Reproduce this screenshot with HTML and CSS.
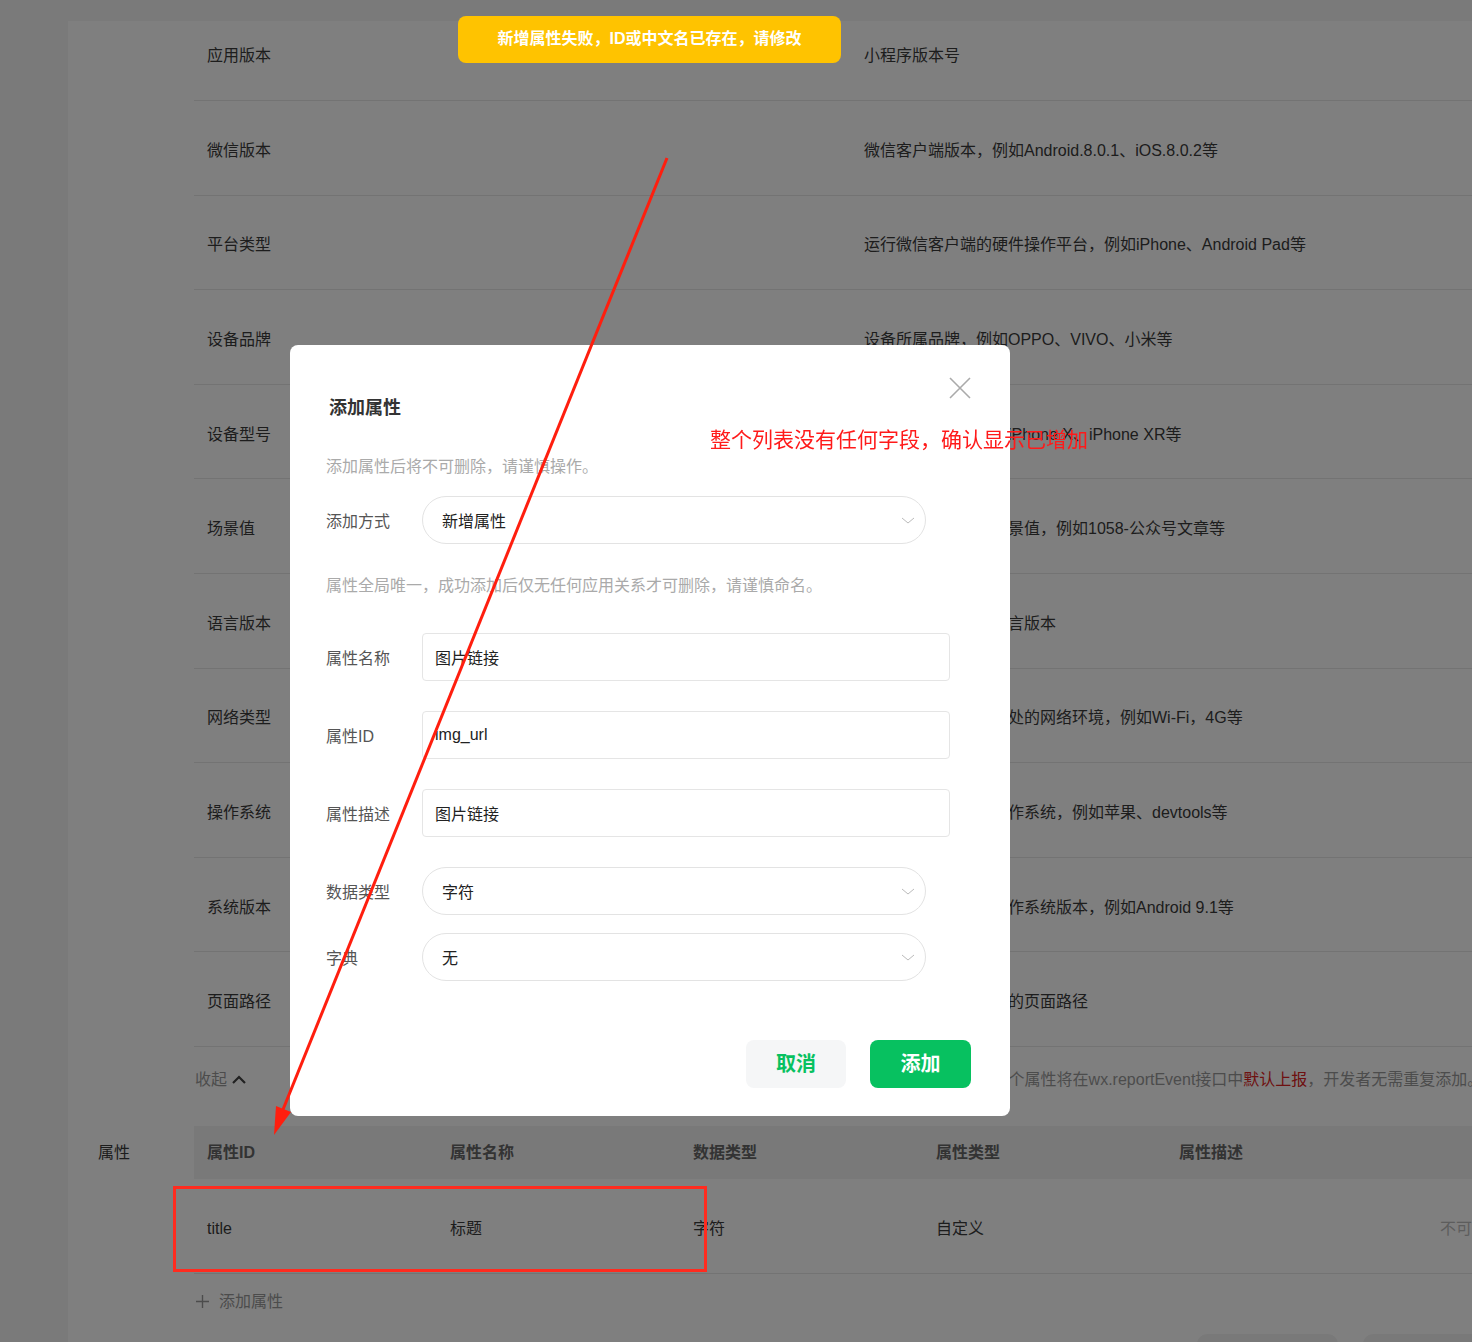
FILE: index.html
```html
<!DOCTYPE html>
<html lang="zh-CN">
<head>
    <meta charset="utf-8">
    <title>属性管理</title>
    <link rel="stylesheet" href="styles.css">
</head>
<body>
    <div class="page">
        <div class="card">
            <!-- preset attributes -->
            <div class="preset-list">
                <div class="preset-row"><span>应用版本</span><span>小程序版本号</span></div>
                <div class="preset-row"><span>微信版本</span><span>微信客户端版本，例如Android.8.0.1、iOS.8.0.2等</span></div>
                <div class="preset-row"><span>平台类型</span><span>运行微信客户端的硬件操作平台，例如iPhone、Android Pad等</span></div>
                <div class="preset-row"><span>设备品牌</span><span>设备所属品牌，例如OPPO、VIVO、小米等</span></div>
                <div class="preset-row"><span>设备型号</span><span>设备具体型号，例如iPhone X、iPhone XR等</span></div>
                <div class="preset-row"><span>场景值</span><span>用户打开小程序的场景值，例如1058-公众号文章等</span></div>
                <div class="preset-row"><span>语言版本</span><span>微信客户端设置的语言版本</span></div>
                <div class="preset-row"><span>网络类型</span><span>小程序运行时设备所处的网络环境，例如Wi-Fi，4G等</span></div>
                <div class="preset-row"><span>操作系统</span><span>用户设备所运行的操作系统，例如苹果、devtools等</span></div>
                <div class="preset-row"><span>系统版本</span><span>用户设备所运行的操作系统版本，例如Android 9.1等</span></div>
                <div class="preset-row"><span>页面路径</span><span>上报时用户当前所处的页面路径</span></div>
                <div class="fold-row">
                    <span class="fold">收起
                        <svg class="fold-icon" width="14" height="9" viewBox="0 0 14 9"><path d="M1 8 L7 2 L13 8" /></svg>
                    </span>
                    <span class="fold-note">以上列表中所示的11个属性将在wx.reportEvent接口中<em>默认上报</em>，开发者无需重复添加。</span>
                </div>
            </div>

            <!-- custom attributes -->
            <div class="attr-section">
                <div class="attr-label">属性</div>
                <div class="attr-table">
                    <div class="attr-head">
                        <span>属性ID</span>
                        <span>属性名称</span>
                        <span>数据类型</span>
                        <span>属性类型</span>
                        <span>属性描述</span>
                        <span></span>
                    </div>
                    <div class="attr-row">
                        <span>title</span>
                        <span>标题</span>
                        <span>字符</span>
                        <span>自定义</span>
                        <span></span>
                        <span class="muted">不可删除</span>
                    </div>
                    <div class="attr-add">
                        <svg width="13" height="13" viewBox="0 0 13 13"><path d="M6.5 0 V13 M0 6.5 H13" /></svg>
                        <span>添加属性</span>
                    </div>
                </div>
            </div>

            <div class="footer-btns">
                <span class="ghost-btn"></span>
                <span class="ghost-btn"></span>
            </div>
        </div>
    </div>

    <div class="mask"></div>

    <div class="dialog">
        <svg class="dialog-close" width="22" height="22" viewBox="0 0 22 22"><path d="M1 1 L21 21 M21 1 L1 21" /></svg>
        <div class="dialog-title">添加属性</div>
        <div class="dialog-tip tip-first">添加属性后将不可删除，请谨慎操作。</div>

        <div class="form-row row-mode">
            <label class="form-label">添加方式</label>
            <div class="select">新增属性
                <svg class="arrow" width="14" height="7" viewBox="0 0 14 7"><path d="M1 1 L7 6 L13 1" /></svg>
            </div>
        </div>

        <div class="dialog-tip tip-second">属性全局唯一，成功添加后仅无任何应用关系才可删除，请谨慎命名。</div>

        <div class="form-row row-first">
            <label class="form-label">属性名称</label>
            <div class="input">图片链接</div>
        </div>
        <div class="form-row">
            <label class="form-label">属性ID</label>
            <div class="input">img_url</div>
        </div>
        <div class="form-row">
            <label class="form-label">属性描述</label>
            <div class="input">图片链接</div>
        </div>
        <div class="form-row">
            <label class="form-label">数据类型</label>
            <div class="select">字符
                <svg class="arrow" width="14" height="7" viewBox="0 0 14 7"><path d="M1 1 L7 6 L13 1" /></svg>
            </div>
        </div>
        <div class="form-row row-tight">
            <label class="form-label">字典</label>
            <div class="select">无
                <svg class="arrow" width="14" height="7" viewBox="0 0 14 7"><path d="M1 1 L7 6 L13 1" /></svg>
            </div>
        </div>

        <div class="dialog-actions">
            <button class="btn btn-cancel">取消</button>
            <button class="btn btn-primary">添加</button>
        </div>
    </div>

    <div class="toast">新增属性失败，ID或中文名已存在，请修改</div>

    <!-- review markup drawn on top of the screenshot -->
    <svg class="markup" width="1472" height="1342" viewBox="0 0 1472 1342">
        <line x1="667" y1="158" x2="282" y2="1112" />
        <polygon points="274,1135 276,1106 291,1112" />
    </svg>
    <div class="markup-text">整个列表没有任何字段，确认显示已增加</div>
    <div class="markup-box"></div>
</body>
</html>
```

FILE: styles.css
```css
html, body {
    margin: 0;
    padding: 0;
    overflow: hidden;
}

body {
    font-family: "Liberation Sans", "Noto Sans CJK SC", sans-serif;
    background-color: #f4f4f4;
    color: #3a3a3a;
    width: 1472px;
    height: 1342px;
    position: relative;
}

.page {
    padding: 21px 0 0 68px;
}

.card {
    width: 1500px;
    height: 1400px;
    background-color: #fff;
    overflow: hidden;
}

/* preset attribute list */
.preset-list {
    margin: -14.6px 0 0 126px;
}

.preset-row {
    display: grid;
    grid-template-columns: 657px 1fr;
    align-items: center;
    height: 94.6px;
    box-sizing: border-box;
    padding: 6px 0 0 13px;
    border-bottom: 1px solid #e6e6e6;
    font-size: 16px;
    line-height: 24px;
    white-space: nowrap;
}

.fold-row {
    display: grid;
    grid-template-columns: 669px 1fr;
    align-items: start;
    height: 79px;
    box-sizing: border-box;
    padding: 21px 0 0 1px;
    font-size: 16px;
    line-height: 24px;
    white-space: nowrap;
}

.fold {
    color: #999;
    display: flex;
    align-items: center;
    gap: 5px;
}

.fold-icon path {
    fill: none;
    stroke: #444;
    stroke-width: 2.2;
}

.fold-note {
    color: #999;
}

.fold-note em {
    font-style: normal;
    color: #d22;
}

/* custom attribute table */
.attr-section {
    display: flex;
}

.attr-label {
    width: 96px;
    padding-left: 30px;
    line-height: 53px;
    font-size: 16px;
    flex: none;
}

.attr-table {
    flex: none;
}

.attr-head,
.attr-row {
    display: grid;
    grid-template-columns: 243px 243px 243px 243px 261px 160px;
    align-items: center;
    box-sizing: border-box;
    font-size: 16px;
    line-height: 24px;
    white-space: nowrap;
}

.attr-head span,
.attr-row span {
    padding-left: 13px;
}

.attr-head {
    height: 53px;
    padding-top: 2px;
    background-color: #f3f3f3;
    font-weight: bold;
    color: #666;
}

.attr-row {
    height: 95px;
    padding-top: 6px;
    border-bottom: 1px solid #e6e6e6;
}

.attr-row .muted {
    color: #bbb;
}

.attr-add {
    display: flex;
    align-items: center;
    gap: 10px;
    margin-top: 16px;
    padding-left: 2px;
    font-size: 16px;
    line-height: 24px;
    color: #999;
}

.attr-add path {
    fill: none;
    stroke: #999;
    stroke-width: 1.4;
}

.footer-btns {
    display: flex;
    gap: 25px;
    padding-left: 1129px;
    margin-top: 20px;
}

.ghost-btn {
    width: 141px;
    height: 40px;
    background-color: #f3f3f3;
    border-radius: 10px;
    flex: none;
}

/* modal */
.mask {
    position: fixed;
    top: 0;
    left: 0;
    right: 0;
    bottom: 0;
    background-color: rgba(0, 0, 0, 0.5);
}

.dialog {
    position: fixed;
    left: 290px;
    top: 345px;
    width: 720px;
    height: 771px;
    box-sizing: border-box;
    padding: 50px 39px 28px 36px;
    background-color: #fff;
    border-radius: 8px;
}

.dialog-close {
    position: absolute;
    top: 32px;
    right: 39px;
}

.dialog-close path {
    fill: none;
    stroke: #aaa;
    stroke-width: 1.6;
}

.dialog-title {
    font-size: 18px;
    line-height: 26px;
    font-weight: bold;
    color: #333;
    padding-left: 3px;
}

.dialog-tip {
    font-size: 16px;
    line-height: 24px;
    color: #aaa;
    white-space: nowrap;
}

.tip-first {
    margin-top: 34px;
}

.tip-second {
    margin-top: 30px;
}

.form-row {
    display: flex;
    align-items: center;
    margin-top: 30px;
}

.form-row.row-mode {
    margin-top: 17px;
}

.form-row.row-first {
    margin-top: 35px;
}

.form-row.row-tight {
    margin-top: 18px;
}

.form-label {
    width: 96px;
    flex: none;
    font-size: 16px;
    color: #555;
}

.select,
.input {
    height: 48px;
    box-sizing: border-box;
    display: flex;
    align-items: center;
    font-size: 16px;
    color: #222;
}

.select {
    width: 504px;
    border: 1px solid #e3e3e3;
    border-radius: 24px;
    justify-content: space-between;
    padding: 0 10px 0 19px;
}

.select .arrow path {
    fill: none;
    stroke: #bbb;
    stroke-width: 1;
}

.input {
    width: 528px;
    border: 1px solid #e5e5e5;
    border-radius: 4px;
    padding: 0 12px;
}

.dialog-actions {
    display: flex;
    justify-content: flex-end;
    gap: 24px;
    margin-top: 59px;
}

.btn {
    height: 48px;
    width: 100px;
    padding: 0 0 3px;
    border: none;
    border-radius: 8px;
    font-family: inherit;
    font-size: 20px;
    font-weight: bold;
    cursor: pointer;
}

.btn-cancel {
    background-color: #f5f6f7;
    color: #07c160;
}

.btn-primary {
    width: 101px;
    background-color: #07c160;
    color: #fff;
}

/* toast */
.toast {
    position: fixed;
    left: 458px;
    top: 16px;
    width: 383px;
    height: 47px;
    box-sizing: border-box;
    padding-bottom: 5px;
    display: flex;
    align-items: center;
    justify-content: center;
    background-color: #ffc300;
    border-radius: 8px;
    color: #fff;
    font-size: 16px;
    font-weight: bold;
}

/* red review markup */
.markup {
    position: absolute;
    left: 0;
    top: 0;
}

.markup line {
    stroke: #ff1e0e;
    stroke-width: 3;
}

.markup polygon {
    fill: #ff1e0e;
}

.markup-text {
    position: absolute;
    left: 710px;
    top: 426px;
    font-size: 21px;
    line-height: 28px;
    color: #ff1a1a;
    white-space: nowrap;
}

.markup-box {
    position: absolute;
    left: 173px;
    top: 1186px;
    width: 534px;
    height: 86px;
    box-sizing: border-box;
    border: 3px solid #ff2b1f;
}
```
